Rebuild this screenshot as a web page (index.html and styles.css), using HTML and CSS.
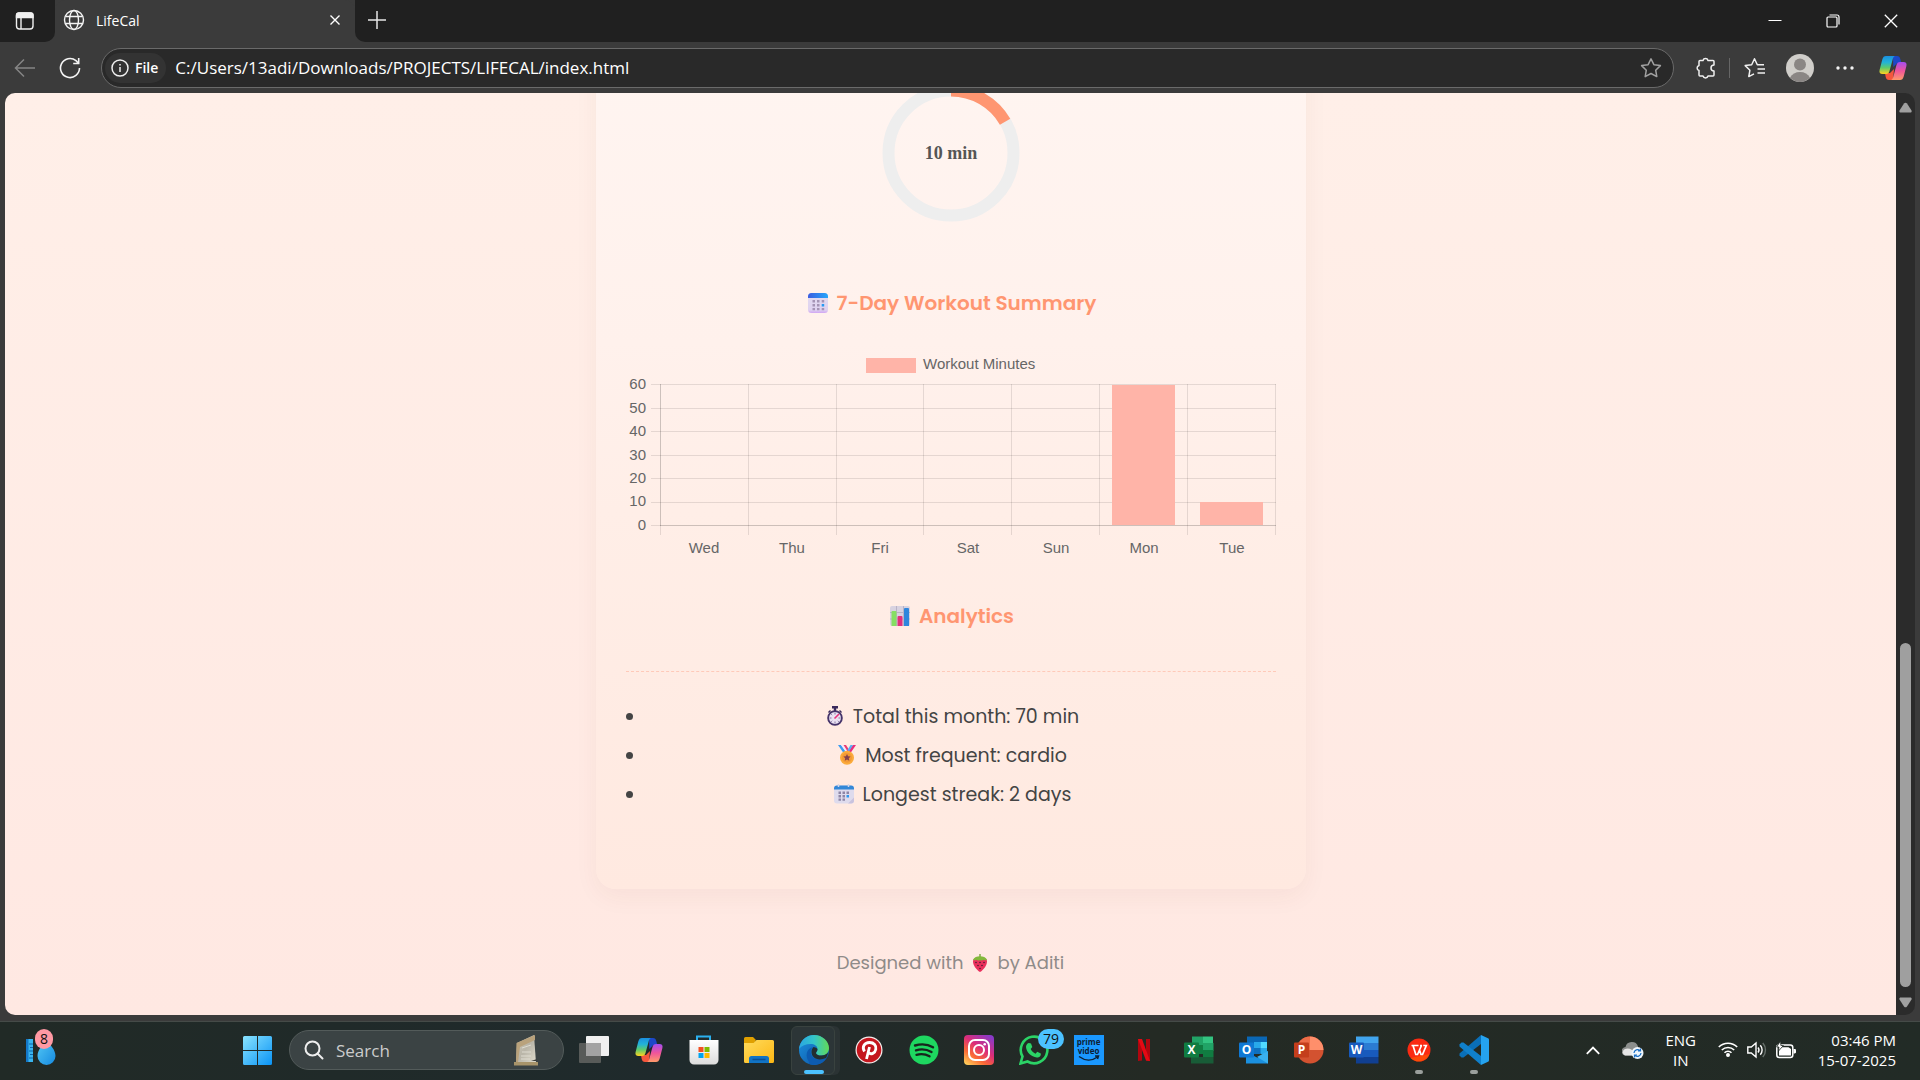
FILE: index.html
```html
<!DOCTYPE html>
<html lang="en">
<head>
<meta charset="utf-8">
<title>LifeCal</title>
<link rel="stylesheet" href="styles.css">
</head>
<body>
<svg class="defs" width="0" height="0" aria-hidden="true">
  <defs>
    <linearGradient id="copA" x1="0" y1="0" x2="0" y2="1"><stop offset="0" stop-color="#1b8fe0"/><stop offset=".35" stop-color="#22b3d8"/><stop offset=".65" stop-color="#5ecb6b"/><stop offset="1" stop-color="#ffd21f"/></linearGradient>
    <linearGradient id="copB" x1="0" y1="0" x2="0" y2="1"><stop offset="0" stop-color="#a34df0"/><stop offset=".5" stop-color="#f0559a"/><stop offset="1" stop-color="#ff9a6a"/></linearGradient>
    <linearGradient id="win" gradientUnits="userSpaceOnUse" x1="0" y1="0" x2="29" y2="29"><stop offset="0" stop-color="#8ae4ff"/><stop offset="1" stop-color="#0a93f5"/></linearGradient>
    <linearGradient id="store" x1="0" y1="0" x2="0" y2="1"><stop offset="0" stop-color="#fff"/><stop offset="1" stop-color="#dcdcdc"/></linearGradient>
    <linearGradient id="folder" x1="0" y1="0" x2="1" y2="1"><stop offset="0" stop-color="#ffdb5c"/><stop offset="1" stop-color="#fcb714"/></linearGradient>
    <linearGradient id="edgeA" x1="0" y1="0" x2="1" y2="0"><stop offset="0" stop-color="#2aa6e2"/><stop offset=".5" stop-color="#34c5c9"/><stop offset="1" stop-color="#62d957"/></linearGradient>
    <linearGradient id="edgeB" x1="0" y1="0" x2="1" y2="1"><stop offset="0" stop-color="#1c93e0"/><stop offset="1" stop-color="#0c4fa0"/></linearGradient>
    <linearGradient id="insta" x1=".1" y1="1" x2=".8" y2="0"><stop offset="0" stop-color="#ffd05a"/><stop offset=".3" stop-color="#fb6a35"/><stop offset=".6" stop-color="#dc2d78"/><stop offset="1" stop-color="#8a3ac8"/></linearGradient>
    <linearGradient id="drop" x1="0" y1="0" x2="1" y2="1"><stop offset="0" stop-color="#55c9f5"/><stop offset="1" stop-color="#158ae0"/></linearGradient>
    <linearGradient id="calTop" x1="0" y1="0" x2="1" y2="0"><stop offset="0" stop-color="#3c5ee0"/><stop offset="1" stop-color="#25a6fb"/></linearGradient>
    <linearGradient id="calBody" x1="0" y1="0" x2="0" y2="1"><stop offset="0" stop-color="#e3dcf0"/><stop offset=".85" stop-color="#dfd2f0"/><stop offset="1" stop-color="#d0a5f3"/></linearGradient>
    <linearGradient id="stone" x1="0" y1="0" x2="1" y2="1"><stop offset="0" stop-color="#cfcabb"/><stop offset=".5" stop-color="#b9b5a8"/><stop offset="1" stop-color="#e0dccd"/></linearGradient>
    <symbol id="copilot" viewBox="0 0 28 26">
      <path d="M14 1h4c2 0 2.800 1 3.300 3l1 4h-4l-4 4z" fill="#1c48c8"/>
      <path d="M14 25h-4c-2 0-2.800-1-3.300-3l-.7-4h5l4-4z" fill="#f5573d"/>
      <path d="M7 1h9c-1.500.6-2 2-2.500 4L10.500 16c-.5 2-1.500 3-3.500 3H3.500C1 19 0 17.500.6 15L3.300 4.500C4 2 5 1 7 1z" fill="url(#copA)"/>
      <path d="M21 25h-9c1.500-.6 2-2 2.500-4l3-11c.5-2 1.500-3 3.500-3h3.500C27 7 28 8.500 27.400 11l-2.700 10.500C24 24 23 25 21 25z" fill="url(#copB)"/>
    </symbol>
  </defs>
</svg>

<div class="screen">
  <header class="titlebar">
    <button class="tb-menu" aria-label="Tab actions"><svg width="20" height="20" viewBox="0 0 20 20" fill="none" stroke="#f0f0f0" stroke-width="1.400"><rect x="1.500" y="2" width="16.500" height="16" rx="3"/><path d="M1.500 6V4a2 2 0 0 1 2-2h12.500a2 2 0 0 1 2 2v2.500H1.500z" fill="#f0f0f0"/><path d="M6 6v12"/></svg></button>
    <div class="tab">
      <svg width="22" height="22" viewBox="0 0 22 22" fill="none" stroke="#f4f4f4" stroke-width="1.400"><circle cx="11" cy="11" r="9.500"/><ellipse cx="11" cy="11" rx="4.500" ry="9.500"/><path d="M2.500 7.500h17M2.500 14.500h17"/></svg>
      <span class="tab-title">LifeCal</span>
      <button class="tab-close" aria-label="Close tab"><svg width="12" height="12" viewBox="0 0 12 12" stroke="#fff" stroke-width="1.400"><path d="M1.500 1.500l9 9M10.500 1.500l-9 9"/></svg></button>
    </div>
    <button class="tb-new" aria-label="New tab"><svg width="18" height="18" viewBox="0 0 18 18" stroke="#e6e6e6" stroke-width="1.500"><path d="M9 0v18M0 9h18"/></svg></button>
    <div class="wincontrols">
      <button aria-label="Minimise"><svg width="14" height="14" viewBox="0 0 14 14" stroke="#fff"><path d="M.5 6.500h13"/></svg></button>
      <button aria-label="Restore"><svg width="14" height="14" viewBox="0 0 14 14" stroke="#fff" fill="none" stroke-width="1.200"><rect x="1" y="3" width="10" height="10" rx="1"/><path d="M3.500 1H11a2 2 0 0 1 2 2v7.500"/></svg></button>
      <button aria-label="Close"><svg width="14" height="14" viewBox="0 0 14 14" stroke="#fff" stroke-width="1.300"><path d="M.8.8l12.400 12.400M13.200.8L.8 13.200"/></svg></button>
    </div>
  </header>

  <nav class="toolbar" aria-label="Browser">
    <button class="cell w50" aria-label="Back"><svg width="22" height="20" viewBox="0 0 22 20" fill="none" stroke="#858585" stroke-width="1.500"><path d="M21 10H2M10 1.500L1.500 10l8.500 8.500"/></svg></button>
    <button class="cell w40" aria-label="Reload"><svg width="22" height="22" viewBox="0 0 22 22" fill="none" stroke="#f4f4f4" stroke-width="1.600"><path d="M20.500 11A9.500 9.500 0 1 1 17 3.700l2.500 2.500M19.700 1v5.500h-5.500"/></svg></button>
    <form class="address">
      <label class="file-chip" for="url"><svg width="18" height="18" viewBox="0 0 18 18" fill="none" stroke="#f0f0f0" stroke-width="1.500"><circle cx="9" cy="9" r="8"/><path d="M9 8v5M9 5v1.500"/></svg>File</label>
      <input id="url" type="text" value="C:/Users/13adi/Downloads/PROJECTS/LIFECAL/index.html">
      <button class="cell w40" type="button" aria-label="Add to favourites"><svg width="22" height="22" viewBox="0 0 22 22" fill="none" stroke="#a0a0a0" stroke-width="1.500" stroke-linejoin="round"><path d="M11 1.800l2.900 5.900 6.500.9-4.700 4.600 1.100 6.400L11 16.500l-5.800 3.100 1.100-6.400L1.600 8.600l6.500-.9z"/></svg></button>
    </form>
    <button class="cell w46" aria-label="Extensions"><svg width="21" height="22" viewBox="0 0 21 22" fill="none" stroke="#f0f0f0" stroke-width="1.500" stroke-linejoin="round"><path d="M5 3.500h3a2.600 2.600 0 0 1 5 0h5a1 1 0 0 1 1 1V8a2.700 2.700 0 0 0 0 6v4a1 1 0 0 1-1 1h-5a2.600 2.600 0 0 1-5 0H5a1 1 0 0 1-1-1v-4.500a2.600 2.600 0 0 1 0-5V4.500a1 1 0 0 1 1-1z"/></svg></button>
    <span class="divider"></span>
    <button class="cell w50" aria-label="Favourites"><svg width="22" height="22" viewBox="0 0 22 22" fill="none" stroke="#f0f0f0" stroke-width="1.500" stroke-linejoin="round"><path d="M20 7.700L13.300 7.700 10.500 1.800 7.700 7.700l-6.500.9 4.700 4.600-1.100 6.400 5.200-2.800M13.500 12h7.500M13.500 16h7.500"/></svg></button>
    <button class="cell w40" aria-label="Profile"><svg width="28" height="28" viewBox="0 0 28 28"><circle cx="14" cy="14" r="14" fill="#d0ceca"/><circle cx="14" cy="10.500" r="6" fill="#8a8684"/><path d="M4 23.800C6 20 9.500 18 14 18s8 2 10 5.800A14 14 0 0 1 4 23.800z" fill="#8a8684"/></svg></button>
    <button class="cell w50" aria-label="More"><svg width="18" height="4" viewBox="0 0 18 4" fill="#f4f4f4"><circle cx="2" cy="2" r="1.700"/><circle cx="9" cy="2" r="1.700"/><circle cx="16" cy="2" r="1.700"/></svg></button>
    <button class="cell w46" aria-label="Copilot"><svg width="28" height="26"><use href="#copilot"/></svg></button>
  </nav>

  <div class="viewport">
    <main class="page">
      <section class="card">
        <svg class="ring" width="150" height="150" viewBox="0 0 150 150" role="img" aria-label="10 min">
          <circle cx="75" cy="75" r="62.500" fill="none" stroke="#eeeeee" stroke-width="12"/>
          <path d="M75 12.500A62.500 62.500 0 0 1 129.100 43.700" fill="none" stroke="#ff9671" stroke-width="12"/>
          <text x="75" y="81" text-anchor="middle">10 min</text>
        </svg>
        <h2 class="summary-title"><svg width="20" height="20" viewBox="0 0 20 20"><rect width="20" height="20" rx="3.500" fill="url(#calBody)"/><path d="M0 5V3.500A3.500 3.500 0 0 1 3.500 0h13A3.500 3.500 0 0 1 20 3.500V5z" fill="url(#calTop)"/><g fill="#a594b5"><path d="M4.500 7h2.500v2.500h-2.500zM9 7h2.500v2.500H9zM13.700 7h2.500v2.500h-2.500zM4.500 11h2.500v2.500h-2.500zM9 11h2.500v2.500H9zM4.500 15h2.500v2.200h-2.500zM9 15h2.500v2.200H9zM13.700 15h2.500v2.200h-2.500z"/></g><path d="M13.700 11h2.500v2.500h-2.500z" fill="#279af2"/></svg><span>7-Day Workout Summary</span></h2>
        <svg class="chart" viewBox="0 0 650 210" role="img" aria-label="Workout minutes by day">
          <rect x="240" y="8" width="50" height="15" fill="#ffb4a8"/>
          <text x="297" y="19">Workout Minutes</text>
          <g class="grid">
            <path d="M25 34.500h625M25 58.500h625M25 81.500h625M25 105.500h625M25 128.500h625M25 152.500h625M25 175.500h625"/>
            <path d="M34.500 34v151M122.500 34v151M210.500 34v151M297.500 34v151M385.500 34v151M473.500 34v151M561.500 34v151M649.500 34v151"/>
            <path d="M34.500 34v142M34 175.500h616"/>
          </g>
          <path d="M486 35h63v140h-63zM574 152h63v23h-63z" fill="#ffb4a8"/>
          <g text-anchor="end"><text x="20" y="39">60</text><text x="20" y="63">50</text><text x="20" y="86">40</text><text x="20" y="110">30</text><text x="20" y="133">20</text><text x="20" y="156">10</text><text x="20" y="180">0</text></g>
          <g text-anchor="middle"><text x="78" y="203">Wed</text><text x="166" y="203">Thu</text><text x="254" y="203">Fri</text><text x="342" y="203">Sat</text><text x="430" y="203">Sun</text><text x="518" y="203">Mon</text><text x="606" y="203">Tue</text></g>
        </svg>
        <h2 class="analytics-title"><svg width="20" height="20" viewBox="0 0 20 20"><rect width="20" height="20" rx="2" fill="#d8d2e0"/><path d="M0 6.500h20M0 13h20M6.500 0v20M13.500 0v20" stroke="#b9b2c6"/><path d="M1.500 6a1 1 0 0 1 1-1h3a1 1 0 0 1 1 1v14h-5z" fill="#86de63"/><path d="M7.500 11a1 1 0 0 1 1-1h3a1 1 0 0 1 1 1v9h-5z" fill="#e2307c"/><path d="M14 3a1 1 0 0 1 1-1h3a1 1 0 0 1 1 1v17h-5z" fill="#2f86dd"/></svg><span>Analytics</span></h2>
        <ul class="stats">
          <li><svg width="18" height="20" viewBox="0 0 18 20"><path d="M6 0h6v2.500h-1.800V5H7.800V2.500H6zM14 4l2 2-1 1-2-2zM4 4L2 6l1 1 2-2z" fill="#3b2a5c"/><circle cx="9" cy="12" r="6.900" fill="#e9e1f2" stroke="#45346a" stroke-width="1.800"/><path d="M9 6.500v2M9 15.500v2M3.500 12h2M12.500 12h2M5.200 8.200l1 1M5.200 15.800l1-1M12.800 15.800l-1-1" stroke="#7b6a98" stroke-width=".9"/><path d="M8.500 12.500L13 8" stroke="#e8317a" stroke-width="1.600"/></svg><span>Total this month: 70 min</span></li>
          <li><svg width="18" height="20" viewBox="0 0 18 20"><path d="M0 0h3l4.500 6-2 2z" fill="#3a9cf2"/><path d="M3 0h2.500L9 5 7.500 6.500z" fill="#f3e8f8"/><path d="M18 0h-3l-4.500 6 2 2z" fill="#e9307c"/><path d="M5.500 0H8l3.500 5.500L10 7z" fill="#ea3a72"/><path d="M15 0h-2.500L9.500 5l1.500 1.500z" fill="#59b0f5"/><circle cx="9" cy="12.700" r="7" fill="#fbab3b"/><circle cx="9" cy="12.700" r="5" fill="#f39a35"/><path d="M9 9l1.100 2.300 2.500.3-1.800 1.700.5 2.500L9 14.600l-2.300 1.200.5-2.500-1.800-1.700 2.500-.3z" fill="#85404c"/></svg><span>Most frequent: cardio</span></li>
          <li><svg width="20" height="20" viewBox="0 0 20 20"><rect y="1.500" width="20" height="18" rx="3" fill="#dedbed"/><path d="M0 5.500v-1a3 3 0 0 1 3-3h14a3 3 0 0 1 3 3v1z" fill="#3388d8"/><path d="M4.500 0v3M14.500 0v3" stroke="#d5d5e8" stroke-width="1.500"/><path d="M14 19.500l6-6v3a3 3 0 0 1-3 3z" fill="#c9c3de"/><g fill="#8d86a6"><path d="M4.500 7.500h2.500V10h-2.500zM8.500 7.500H11V10H8.500zM12.500 7.500H15V10h-2.500zM4.500 11h2.500v2.500h-2.500zM8.500 11H11v2.500H8.500zM4.500 14.500h2.500v2.300h-2.500zM8.500 14.500H11v2.300H8.500z"/></g><path d="M12.500 11H15v2.500h-2.500z" fill="#2c97ee"/></svg><span>Longest streak: 2 days</span></li>
        </ul>
      </section>
      <footer class="credit"><span>Designed with</span><svg width="14" height="18" viewBox="0 0 14 18"><path d="M7 18C3.500 16 0 11.500 0 7.500 0 4.500 2.500 3.500 7 3.500s7 1 7 4C14 11.500 10.500 16 7 18z" fill="#ea2f5c"/><path d="M7 3V0" stroke="#6aa32e" stroke-width="1.300"/><path d="M0 5.800C1 3.200 4 2.200 7 2.200s6 1 7 3.600c-1.500.8-2.600.6-3.600 0-1 1-2.400 1-3.400.2-1 .8-2.400.8-3.400-.2-1 .6-2.100.8-3.600 0z" fill="#82b83a"/><g fill="#4b1c33"><circle cx="3" cy="8.500" r=".8"/><circle cx="7" cy="8.500" r=".8"/><circle cx="11" cy="8.500" r=".8"/><circle cx="5" cy="11.500" r=".8"/><circle cx="9" cy="11.500" r=".8"/><circle cx="7" cy="14.500" r=".8"/></g></svg><span>by Aditi</span></footer>
    </main>
    <div class="scrollbar">
      <svg width="13" height="11" viewBox="0 0 13 11"><path d="M5 1.500a2 2 0 0 1 3 0l4.500 7c.5 1-.2 2-1 2h-10c-.8 0-1.500-1-1-2z" fill="#a0a0a0"/></svg>
      <span class="thumb"></span>
      <svg width="13" height="11" viewBox="0 0 13 11"><path d="M5 9.500a2 2 0 0 0 3 0l4.500-7c.5-1-.2-2-1-2h-10c-.8 0-1.500 1-1 2z" fill="#a0a0a0"/></svg>
    </div>
  </div>

  <footer class="taskbar">
    <button class="widgets" aria-label="Widgets"><svg width="32" height="30" viewBox="0 0 32 30"><path d="M0 4h7v23H0z" fill="#39b5ef"/><path d="M0 4h2.500v23H0z" fill="#1478c8"/><path d="M3 9h4M4 12.500h3M3 16h4M4 19.500h3M3 23h4" stroke="#0f66ad"/><path d="M20.500 5c4 5 9 10 9 16a9 9 0 0 1-18 0c0-6 5-11 9-16z" fill="url(#drop)"/></svg><span class="badge pink">8</span></button>
    <div class="apps">
      <button class="app" aria-label="Start"><svg width="29" height="29" viewBox="0 0 29 29" fill="url(#win)"><path d="M1.500 0H14v14H0V1.500A1.500 1.500 0 0 1 1.500 0zM15 0h12.500A1.500 1.500 0 0 1 29 1.500V14H15zM0 15h14v14H1.500A1.500 1.500 0 0 1 0 27.500zM15 15h14v12.500a1.500 1.500 0 0 1-1.500 1.500H15z"/></svg></button>
      <form class="search">
        <svg width="20" height="20" viewBox="0 0 20 20" fill="none" stroke="#eee" stroke-width="2"><circle cx="8.500" cy="8.500" r="7"/><path d="M13.500 13.500l5 5" stroke-linecap="round"/></svg>
        <input type="text" placeholder="Search" aria-label="Search">
        <svg width="24" height="32" viewBox="0 0 24 32"><path d="M3 9L20 1l2 28H2z" fill="url(#stone)"/><path d="M2.500 9L21 1v5L6 13 4 28H2z" fill="#b9a27c"/><path d="M8 14l9-3M8 18h9M7 22h10M7 25h9" stroke="#dedbd0"/><path d="M0 28h24v3.500H0z" fill="#a8946a"/><path d="M17 27h5l1-2z" fill="#3a3d3a"/></svg>
      </form>
      <button class="app" aria-label="Task view"><svg width="30" height="28" viewBox="0 0 30 28"><rect x="7" width="23" height="20" rx="1" fill="#f0f0f0"/><rect y="7" width="22" height="20" rx="1" fill="#585b59"/><path d="M7 7h15v13H7z" fill="#a3a3a3"/></svg></button>
      <button class="app" aria-label="Copilot"><svg width="28" height="26"><use href="#copilot"/></svg></button>
      <button class="app" aria-label="Microsoft Store"><svg width="30" height="30" viewBox="0 0 30 30"><path d="M8 7V1.500h13V7" fill="none" stroke="#2bb0ef" stroke-width="2"/><path d="M.5 5h29v20a4.500 4.500 0 0 1-4.500 4.500H5A4.500 4.500 0 0 1 .5 25z" fill="url(#store)"/><path d="M9.500 12h5v5h-5z" fill="#f25022"/><path d="M15.500 12h5v5h-5z" fill="#7fba00"/><path d="M9.500 18h5v5h-5z" fill="#00a4ef"/><path d="M15.500 18h5v5h-5z" fill="#ffb900"/></svg></button>
      <button class="app" aria-label="File Explorer"><svg width="30" height="28" viewBox="0 0 30 28"><path d="M0 2.500A1.500 1.500 0 0 1 1.500 1H9l3 3-2 4H0z" fill="#e0a000"/><path d="M0 7h9.500l3-3h16A1.500 1.500 0 0 1 30 5.500v20a1.500 1.500 0 0 1-1.500 1.500h-27A1.500 1.500 0 0 1 0 25.500z" fill="url(#folder)"/><path d="M5 27v-4.500A2.500 2.500 0 0 1 7.500 20h15a2.500 2.500 0 0 1 2.500 2.500V27z" fill="#1173c4"/><path d="M8.500 23.500h13" stroke="#0b4f94" stroke-width="1.500"/></svg></button>
      <button class="app active" aria-label="Edge"><svg width="30" height="30" viewBox="0 0 30 30"><circle cx="15" cy="15" r="15" fill="url(#edgeB)"/><path d="M0 14C1 5.500 7.500 0 15 0c8.500 0 15 6.500 15 13 0 4.500-3 7.500-7.500 7.500-3.500 0-5.500-1.300-5.500-2.600 0-1 1.500-1.700 1.500-4 0-3-3-5-7-5C7 8.900 2.500 10.500 0 14z" fill="url(#edgeA)"/><path d="M10 27c-4-6-3-13 4-15-2 2-2.500 4-2 6.500C13 24 19 26.500 27.500 23 25 27.500 20 30 15 30a15 15 0 0 1-5-1z" fill="#0d5bb0"/><path d="M17 17.900c0 1.300 2 2.600 5.500 2.600 2.500 0 5-1 6.500-3-.3 2-1 4-2 5.500C19 26.500 12.500 23 12.500 17c0-2 .5-3.500 2-5 2.500.3 4 1.500 4 2.500 0 1.700-1.500 2.400-1.500 3.400z" fill="#232d2f"/></svg></button>
      <button class="app" aria-label="Pinterest"><svg width="28" height="28" viewBox="0 0 28 28"><circle cx="14" cy="14" r="13.500" fill="#f5eeee"/><circle cx="14" cy="14" r="12.300" fill="#c4161e"/><path d="M9.500 15.500C6.500 11 9.500 6.500 14.500 6.500c4.500 0 7 3 6.300 6.700-.7 4-5 6-7.300 3.300M14.500 11L11.500 23" fill="none" stroke="#fff" stroke-width="2.800"/></svg></button>
      <button class="app" aria-label="Spotify"><svg width="30" height="30" viewBox="0 0 30 30"><circle cx="15" cy="15" r="14.500" fill="#1ed760"/><path d="M6 10.500c6-1.800 13-1.200 18 1.800M7 15.300c5-1.500 11-.9 15.500 1.700M7.500 19.800c4.500-1.200 9-.8 13 1.500" fill="none" stroke="#17251c" stroke-width="2.400" stroke-linecap="round"/></svg></button>
      <button class="app" aria-label="Instagram"><svg width="30" height="30" viewBox="0 0 30 30"><rect width="30" height="30" rx="4" fill="url(#insta)"/><rect x="5" y="5" width="20" height="20" rx="6" fill="none" stroke="#fff" stroke-width="2"/><circle cx="15" cy="15" r="5" fill="none" stroke="#fff" stroke-width="2"/><circle cx="20.700" cy="9.300" r="1.300" fill="#fff"/></svg></button>
      <button class="app" aria-label="WhatsApp"><svg width="30" height="30" viewBox="0 0 30 30"><path d="M1.500 28.500l2-7A13.300 13.300 0 1 1 8.500 26.500z" fill="none" stroke="#2bd366" stroke-width="2.600"/><path d="M10 8l2 .5 1.300 3.500-1.600 2c1 2.200 2.500 3.700 4.800 4.700l1.800-2 3.500 1.700c.4 3-2 4.200-4 4-5.500-.5-10.500-5.500-10.800-10.500C7 10 8.500 8 10 8z" fill="#2bd366"/></svg><span class="badge blue">79</span></button>
      <button class="app" aria-label="Prime Video"><span class="prime"><span>prime</span><span>video</span><svg width="22" height="7" viewBox="0 0 22 7" fill="none" stroke="#0d2033" stroke-width="1.500"><path d="M1 1.500c6 4.500 13 4.500 18.500.5M17 1h3.500l-1 3"/></svg></span></button>
      <button class="app" aria-label="Netflix"><svg width="12" height="22" viewBox="0 0 12 22"><path d="M0 0h4v21.500L0 22zM8 0h4v22l-4-.5z" fill="#b1060f"/><path d="M0 0h4l8 22-4-.5z" fill="#e50914"/></svg></button>
      <button class="app" aria-label="Excel"><svg class="office" width="30" height="28" viewBox="0 0 30 28"><path d="M8 .5h11v9H8z" fill="#21a366"/><path d="M19 .5h10v9H19z" fill="#33c481"/><path d="M7 9h12v9H7z" fill="#107c41"/><path d="M19 7h10.500v8H19z" fill="#21a366"/><path d="M19 14h10.500v7H19z" fill="#107c41"/><path d="M7 21h22.500v6.500H7z" fill="#185c37"/><rect y="6.500" width="15" height="15" rx="1" fill="#107c41"/><text x="7.500" y="18" text-anchor="middle">X</text></svg></button>
      <button class="app" aria-label="Outlook"><svg class="office" width="30" height="28" viewBox="0 0 30 28"><path d="M8 .5h20V17H8z" fill="#0a67b5"/><path d="M15 6h6.500v6H15z" fill="#28a8ea"/><path d="M21.500 6H28v6h-6.500z" fill="#50d9ff"/><path d="M15 12h6.500v6H15z" fill="#0f6fbe"/><path d="M21.500 12H28v6h-6.500z" fill="#28a8ea"/><path d="M7 16l12 6 10-7v12.500H7z" fill="#1b90df"/><path d="M18 21l11 6.500V15z" fill="#39b0ee"/><rect y="6.500" width="15" height="15" rx="1" fill="#0f78d4"/><text x="7.500" y="18" text-anchor="middle">O</text></svg></button>
      <button class="app" aria-label="PowerPoint"><svg class="office" width="30" height="28" viewBox="0 0 30 28"><circle cx="16" cy="14" r="13.500" fill="#d35230"/><path d="M16 .5A13.500 13.500 0 0 1 29.500 14H16z" fill="#ff8f6b"/><path d="M16 .5A13.500 13.500 0 0 0 2.500 14H16z" fill="#ed6c47"/><rect y="6.500" width="15" height="15" rx="1" fill="#c43e1c"/><text x="7.500" y="18" text-anchor="middle">P</text></svg></button>
      <button class="app" aria-label="Word"><svg class="office" width="30" height="28" viewBox="0 0 30 28"><path d="M7 .5h22.500V7H7z" fill="#41a5ee"/><path d="M7 7h22.500v7H7z" fill="#2b7cd3"/><path d="M7 14h22.500v7H7z" fill="#185abd"/><path d="M7 21h22.500v6.500H7z" fill="#103f91"/><rect y="6.500" width="15" height="15" rx="1" fill="#185abd"/><text x="7.500" y="18" text-anchor="middle">W</text></svg></button>
      <button class="app running" aria-label="WPS Office"><svg width="24" height="24" viewBox="0 0 24 24"><circle cx="12" cy="12" r="11.500" fill="#fa2a12"/><path d="M3.500 20A11.500 11.500 0 0 0 22.500 16z" fill="#ff6a00" opacity=".5"/><path d="M4.500 7.500h7M6 7.500l2.800 9h1.700l4-9M13 7.500h2M12.500 12l1.500 4.500h1.500l3.800-9h-3" fill="none" stroke="#fff" stroke-width="1.700"/></svg></button>
      <button class="app running" aria-label="Visual Studio Code"><svg width="30" height="30" viewBox="0 0 30 30"><path d="M22 0v9L4.500 22.500 2.500 22.500.5 20.500v-2z" fill="#0a6fb8"/><path d="M22 30v-9L4.500 7.500 2.500 7.500.5 9.500v2z" fill="#1080cc"/><path d="M22 0l7 3.200c.7.300 1 .8 1 1.500v20.600c0 .7-.3 1.200-1 1.500L22 30z" fill="#25a3f0"/></svg></button>
    </div>
    <div class="tray">
      <button class="cell w40" aria-label="Hidden icons"><svg width="14" height="9" viewBox="0 0 14 9" fill="none" stroke="#fff" stroke-width="1.800"><path d="M.8 7.800L7 1.500l6.200 6.300"/></svg></button>
      <button class="cell w40" aria-label="OneDrive"><svg width="22" height="18" viewBox="0 0 22 18"><path d="M4 14.500A4.200 4.200 0 0 1 3.500 6 6.500 6.500 0 0 1 16 5.500v9z" fill="#8b8e8c"/><path d="M3 14.500A3.500 3.500 0 0 1 3 8c4-1.500 7 .5 9 3v3.500z" fill="#e6e6e6"/><circle cx="15.500" cy="12" r="6" fill="#eef5fb"/><path d="M12 12a3.500 3.500 0 0 1 6-2.300M19 12a3.500 3.500 0 0 1-6 2.300M18.500 7.500v2.500H16M12.500 16.500V14H15" fill="none" stroke="#1a6fc4" stroke-width="1.200"/></svg></button>
      <button class="lang">ENG<br>IN</button>
      <button class="status" aria-label="Network, volume and battery">
        <svg width="20" height="16" viewBox="0 0 20 16" fill="none" stroke="#fff" stroke-width="1.600"><path d="M.8 6a13 13 0 0 1 18.400 0M3.800 9a9 9 0 0 1 12.400 0M6.500 11.800a5 5 0 0 1 7 0"/><circle cx="10" cy="14" r="1.200" fill="#fff"/></svg>
        <svg width="20" height="18" viewBox="0 0 20 18" fill="none" stroke="#fff" stroke-width="1.400"><path d="M.8 6h3.500L9 2v14l-4.700-4H.8z"/><path d="M11 6.500a4 4 0 0 1 0 5M13.300 4.300a7 7 0 0 1 0 9.400"/><path d="M15.800 2a10.500 10.500 0 0 1 0 14" stroke="#67706b"/></svg>
        <svg width="20" height="18" viewBox="0 0 20 18"><rect x=".8" y="4" width="16" height="12.500" rx="2.500" fill="none" stroke="#fff" stroke-width="1.500"/><path d="M3 6.200h9.500L15 8v6.500H3z" fill="#fff"/><path d="M17.500 8h1.200c.7 0 1.300.6 1.300 1.200v2.100c0 .7-.6 1.200-1.300 1.200h-1.200z" fill="#fff"/><path d="M4.500 0L.6 6h2.300L2.500 10 7.400 4.500H4.900z" fill="#fff" stroke="#222b26" stroke-width=".8"/></svg>
      </button>
      <button class="clock">03:46 PM<br>15-07-2025</button>
    </div>
  </footer>
</div>
</body>
</html>
```
FILE: styles.css
```css
* { box-sizing: border-box; }

body {
  margin: 0;
  background: #3b3b3b;
  font-family: "Open Sans", "Noto Sans", sans-serif;
  color: #fff;
}

button {
  border: 0;
  padding: 0;
  background: none;
  color: inherit;
  font: inherit;
}

svg { display: block; flex: none; }
input { min-width: 0; border: 0; padding: 0; background: none; color: inherit; font: inherit; outline: 0; }
.defs { position: absolute; }

.screen {
  display: flex;
  flex-direction: column;
  height: 100vh;
  overflow: hidden;
}

/* Tab strip */
.titlebar {
  display: flex;
  height: 42px;
  flex: none;
  background: #3b3b3b;
}
.titlebar > * { background: #202020; }
.tb-menu {
  display: flex;
  align-items: center;
  width: 55px;
  padding-left: 15px;
  border-bottom-right-radius: 10px;
}
.titlebar .tab {
  display: flex;
  align-items: center;
  flex: 0 0 300px;
  gap: 11px;
  padding: 0 12px 2px 8px;
  border-radius: 10px 10px 0 0;
  background: #3b3b3b;
}
.tab-title { flex: 1; font-size: 14px; }
.tab-close { display: grid; place-items: center; width: 16px; height: 24px; }
.tb-new {
  display: grid;
  place-items: center;
  width: 44px;
  padding-bottom: 3px;
  border-bottom-left-radius: 10px;
}
.wincontrols {
  display: flex;
  flex: 1;
  justify-content: flex-end;
}
.wincontrols button { display: grid; place-items: center; width: 58px; }

/* Address row */
.toolbar {
  display: flex;
  align-items: center;
  flex: none;
  height: 51px;
  padding-right: 4px;
}
.cell { display: grid; place-items: center; flex: none; height: 40px; }
.w40 { width: 40px; }
.w46 { width: 46px; }
.w50 { width: 50px; }
.address {
  display: flex;
  align-items: center;
  flex: 1;
  height: 40px;
  margin: 0 8px 0 11px;
  padding: 0 2px 0 3px;
  border: 1px solid #6a6a6a;
  border-radius: 20px;
  background: #292929;
}
.file-chip {
  display: flex;
  align-items: center;
  gap: 6px;
  height: 30px;
  padding: 0 8px 0 6px;
  border-radius: 15px;
  background: #333;
  font-size: 14px;
  font-weight: 600;
}
.address input { flex: 1; margin-left: 9px; font-size: 17px; }
.divider { width: 1px; height: 20px; margin-left: 1px; background: #666; }

/* Web page, scrolled to its end */
.viewport {
  display: flex;
  flex: 1;
  min-height: 0;
  margin: 0 5px 6px;
  border-radius: 10px;
  overflow: hidden;
}
.page {
  display: flex;
  flex-direction: column;
  justify-content: flex-end;
  align-items: center;
  flex: 1;
  min-width: 0;
  background: linear-gradient(#ffefe8, #ffe8e2);
  font-family: Poppins, Inter, sans-serif;
  color: #444;
}
.card {
  display: flex;
  flex-direction: column;
  align-items: center;
  flex: none;
  width: 100%;
  max-width: 710px;
  padding: 30px;
  border-radius: 20px;
  background: linear-gradient(#fff5f1, #fff1ec 35%, #ffeee7 55%, #ffe9e0);
  box-shadow: 0 8px 24px rgba(120, 60, 40, .05);
}
.ring text {
  font: bold 18px "Liberation Serif", serif;
  fill: #555;
}
.card h2 {
  display: flex;
  align-items: center;
  gap: 9px;
  margin: 0;
  padding-left: 3px;
  color: #ff9671;
  font-size: 20px;
  line-height: 30px;
  font-weight: 600;
}
.card .summary-title { margin: 60px 0 32px; }
.chart { width: 100%; }
.chart text { font: 15px "Liberation Sans", Arial, sans-serif; fill: #666; }
.grid { fill: none; stroke: rgba(0, 0, 0, .1); }
.card .analytics-title { margin: 41px 0 40px; }
.stats {
  align-self: stretch;
  margin: 0 0 45px;
  padding: 25px 16px 0 20px;
  border-top: 1px dashed #ffcab9;
  font-size: 19px;
  line-height: 39px;
  text-align: center;
}
.stats li svg {
  display: inline-block;
  margin-right: 9px;
  vertical-align: -3px;
}
.credit {
  display: flex;
  align-items: center;
  gap: 10px;
  padding: 60px 0 38px;
  color: #8f8b89;
  font-size: 18px;
  line-height: 28px;
}
.scrollbar {
  display: flex;
  flex-direction: column;
  align-items: center;
  width: 19px;
  padding: 9px 0 7px;
  background: #2b2b2b;
}
.thumb {
  width: 11px;
  height: 38%;
  margin: auto 0 10px;
  border-radius: 6px;
  background: #9f9f9f;
}

/* Taskbar */
.taskbar {
  display: flex;
  flex: none;
  height: 59px;
  padding-bottom: 2px;
  border-top: 1px solid #454b48;
  background: linear-gradient(90deg, #212a26, #1f2a2c 35%, #242a24 60%, #222b26);
}
.widgets {
  position: relative;
  width: 230px;
  padding-left: 26px;
}
.badge {
  position: absolute;
  border-radius: 10px;
  color: #111;
  font-size: 14px;
  line-height: 20px;
  text-align: center;
}
.pink { left: 35px; top: 7px; width: 18px; background: #ff99a4; }
.blue { left: 32px; top: 7px; width: 26px; background: #4cc2ff; }
.apps { display: flex; flex: 1; }
.app {
  position: relative;
  display: grid;
  place-items: center;
  flex: none;
  width: 55px;
}
.search {
  display: flex;
  align-items: center;
  gap: 12px;
  width: 275px;
  height: 40px;
  margin: 8px 2px 0 4px;
  padding: 0 25px 0 14px;
  border: 1px solid #535b5a;
  border-radius: 20px;
  background: #3b4344;
}
.search input { flex: 1; font-size: 17px; }
.search input::placeholder { color: #ccc; opacity: 1; }
.active { z-index: 0; }
.active::before {
  content: "";
  position: absolute;
  z-index: -1;
  inset: 4px 6px 3px 5px;
  border: 1px solid #39423f;
  border-radius: 6px;
  background: #2c3537;
  box-shadow: 5px 0 0 #2b3334;
}
.active::after,
.running::after {
  content: "";
  position: absolute;
  bottom: 4px;
  width: 8px;
  height: 4px;
  border-radius: 2px;
  background: #9a9f9c;
}
.active::after { width: 20px; background: #4cc2ff; }
.prime {
  display: flex;
  flex-direction: column;
  align-items: center;
  width: 30px;
  height: 30px;
  padding-top: 2px;
  background: #1a98ff;
  color: #0d2033;
  font-size: 8px;
  font-weight: 700;
  line-height: 9px;
}
.office text { font: bold 12px "Open Sans", sans-serif; fill: #fff; }
.tray {
  display: flex;
  align-items: center;
  flex: none;
  padding-right: 24px;
  font-size: 15px;
  line-height: 20px;
}
.lang { width: 56px; }
.status { display: flex; gap: 9px; margin: 0 22px 0 9px; }
.clock { text-align: right; }
```
